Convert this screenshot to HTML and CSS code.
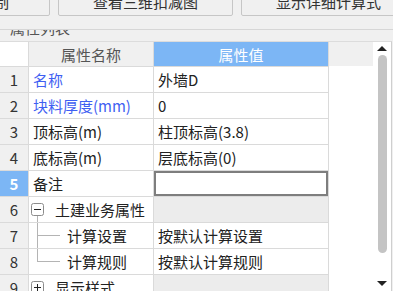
FILE: index.html
```html
<!DOCTYPE html>
<html lang="zh-CN">
<head>
  <meta charset="UTF-8" />
  <title>属性列表</title>
  <link rel="stylesheet" href="styles.css">
</head>
<body>
  <div class="toolbar">
    <button class="btn btn-first">绘制</button>
    <button class="btn btn-mid">查看三维扣减图</button>
    <button class="btn btn-last">显示详细计算式</button>
  </div>

  <div class="panel">
    <div class="group-title"><span>属性列表</span></div>

    <div class="grid-wrap">
      <div class="grid">
        <div class="cell corner"></div>
        <div class="cell head">属性名称</div>
        <div class="cell head head-sel">属性值</div>

        <div class="cell num">1</div>
        <div class="cell name blue">名称</div>
        <div class="cell val">外墙D</div>

        <div class="cell num">2</div>
        <div class="cell name blue">块料厚度(mm)</div>
        <div class="cell val">0</div>

        <div class="cell num">3</div>
        <div class="cell name">顶标高(m)</div>
        <div class="cell val">柱顶标高(3.8)</div>

        <div class="cell num">4</div>
        <div class="cell name">底标高(m)</div>
        <div class="cell val">层底标高(0)</div>

        <div class="cell num num-sel">5</div>
        <div class="cell name">备注</div>
        <div class="cell val editing"></div>

        <div class="cell num">6</div>
        <div class="cell name group tree-open">
          <svg class="toggle" width="13" height="13" viewBox="0 0 13 13"><rect x="0.5" y="0.5" width="12" height="12" rx="2" fill="#fff" stroke="#8c8c8c"/><path d="M3 6.5h7" stroke="#222"/></svg>
          <span>土建业务属性</span>
        </div>
        <div class="cell val gray"></div>

        <div class="cell num">7</div>
        <div class="cell name child tree-mid">计算设置</div>
        <div class="cell val">按默认计算设置</div>

        <div class="cell num">8</div>
        <div class="cell name child tree-end">计算规则</div>
        <div class="cell val">按默认计算规则</div>

        <div class="cell num">9</div>
        <div class="cell name group">
          <svg class="toggle" width="13" height="13" viewBox="0 0 13 13"><rect x="0.5" y="0.5" width="12" height="12" rx="2" fill="#fff" stroke="#8c8c8c"/><path d="M3 6.5h7M6.5 3v7" stroke="#222"/></svg>
          <span>显示样式</span>
        </div>
        <div class="cell val gray"></div>
      </div>

      <div class="filler">
        <div class="filler-head"></div>
      </div>

      <div class="scrollbar">
        <div class="arrow-up"></div>
        <div class="thumb"></div>
        <div class="arrow-down"></div>
      </div>
    </div>
  </div>
</body>
</html>
```

FILE: styles.css
```css
* {
  box-sizing: border-box;
}

body {
  margin: 0;
  width: 393px;
  height: 291px;
  overflow: hidden;
  background: #f0f0f0;
  font-family: "Noto Sans CJK SC", "Noto Sans", sans-serif;
  font-size: 15px;
  color: #222;
}

/* top buttons, mostly scrolled out of view */
.toolbar {
  display: flex;
  height: 16px;
  overflow: hidden;
}

.btn {
  flex: none;
  height: 30px;
  margin-top: -14px;
  padding: 0;
  border: 1px solid #c6c6c6;
  border-radius: 2px;
  background: #f0f0f0;
  font: inherit;
  color: #333;
}

.btn-first {
  width: 90px;
  margin-left: -40px;
  text-align: right;
  padding-right: 40px;
}

.btn-mid {
  width: 175px;
  margin-left: 8px;
}

.btn-last {
  width: 175px;
  margin-left: 8px;
}

.panel {
  margin-top: 13px;
  border-top: 1px solid #d6d6d6;
}

.group-title {
  height: 11px;
  overflow: hidden;
}

.group-title span {
  display: block;
  margin-top: -13px;
  padding-left: 10px;
  line-height: 22px;
  color: #555;
}

.grid-wrap {
  display: flex;
  width: 392px;
  height: 250px;
  background: #fff;
  border-top: 1px solid #dcdcdc;
  border-right: 1px solid #cfcfcf;
}

.grid {
  flex: none;
  display: grid;
  grid-template-columns: 29px 125px 175px;
  grid-template-rows: 25px repeat(9, 26px);
}

.cell {
  display: flex;
  align-items: center;
  border-right: 1px solid #dadada;
  border-bottom: 1px solid #dadada;
  white-space: nowrap;
  overflow: hidden;
}

.corner {
  background: #fff;
}

.head {
  justify-content: center;
  background: #f0f0f0;
  color: #555;
}

.head-sel {
  background: #7cb6f5;
  color: #fff;
}

.num {
  justify-content: center;
  background: #f0f0f0;
  color: #333;
}

.num-sel {
  background: #7cb6f5;
  color: #fff;
  font-weight: bold;
}

.name {
  padding-left: 4px;
  position: relative;
}

.blue {
  color: #3f5ff2;
}

.val {
  padding-left: 4px;
}

.gray {
  background: #ececec;
}

.editing {
  box-shadow: inset 0 0 0 2px #7e7e7e;
}

.group {
  padding-left: 2px;
}

.toggle {
  flex: none;
  margin-right: 11px;
}

.child {
  padding-left: 38px;
}

/* tree connector lines */
.tree-open::after,
.tree-mid::before,
.tree-end::before {
  content: "";
  position: absolute;
  left: 8px;
  border-left: 1px solid #b4b4b4;
}

.tree-open::after {
  top: 19px;
  bottom: -1px;
}

.tree-mid::before {
  top: 0;
  bottom: -1px;
}

.tree-end::before {
  top: 0;
  height: 13px;
}

.tree-mid::after,
.tree-end::after {
  content: "";
  position: absolute;
  left: 9px;
  top: 12px;
  width: 22px;
  border-top: 1px solid #b4b4b4;
}

.filler {
  width: 44px;
  flex: none;
}

.filler-head {
  height: 24px;
  background: #f0f0f0;
}

.scrollbar {
  flex: 1;
  display: flex;
  flex-direction: column;
  align-items: center;
  padding-top: 4px;
}

.arrow-up {
  width: 0;
  height: 0;
  border-left: 5px solid transparent;
  border-right: 5px solid transparent;
  border-bottom: 5px solid #222;
}

.thumb {
  width: 9px;
  height: 198px;
  margin-top: 4px;
  border-radius: 5px;
  background: #c4c4c4;
}

.arrow-down {
  width: 0;
  height: 0;
  margin-top: 28px;
  border-left: 5px solid transparent;
  border-right: 5px solid transparent;
  border-top: 5px solid #222;
}
```
